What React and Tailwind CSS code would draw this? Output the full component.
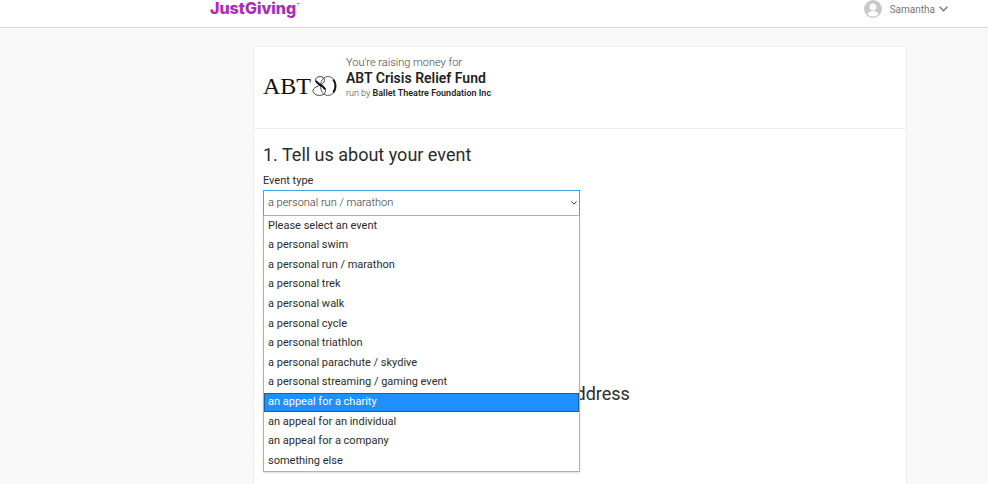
import { useState } from 'react'

const EVENT_TYPES = [
  'Please select an event',
  'a personal swim',
  'a personal run / marathon',
  'a personal trek',
  'a personal walk',
  'a personal cycle',
  'a personal triathlon',
  'a personal parachute / skydive',
  'a personal streaming / gaming event',
  'an appeal for a charity',
  'an appeal for an individual',
  'an appeal for a company',
  'something else',
]

export default function App() {
  return (
    <div className="min-h-screen bg-[#f8f8f8] font-['Roboto',sans-serif] text-[#2b2b2b]">
      <Header />
      <main className="pt-[18px] pr-[81px] pl-[253px]">
        <div className="border border-[#eeeeee] bg-white">
          <CharitySummary />
          <EventForm />
        </div>
      </main>
    </div>
  )
}

function Header() {
  return (
    <header className="flex h-7 items-start justify-between border-b border-[#dcdcdc] bg-white pl-[210px] pr-10">
      <a href="#home" className="flex items-start font-['Inter',sans-serif] text-base leading-4 font-extrabold text-[#ad29b6]">
        JustGiving
        <span className="text-[5px] leading-[10px]">™</span>
      </a>
      <button className="flex h-[18px] items-center gap-2 text-[10px] text-[#777777]">
        <Avatar />
        Samantha
        <svg className="-ml-1 h-[6px] w-[9px]" viewBox="0 0 9 6" fill="none" stroke="#777777" strokeWidth="1.4">
          <path d="M0.6 0.8 4.5 4.8 8.4 0.8" />
        </svg>
      </button>
    </header>
  )
}

function Avatar() {
  return (
    <svg className="size-[18px]" viewBox="0 0 18 18">
      <circle cx="9" cy="9" r="9" fill="#c9c9c9" />
      <circle cx="9" cy="7" r="3.4" fill="#fff" />
      <path d="M3.4 14.2c1-2.3 3-3.1 5.6-3.1s4.6.8 5.6 3.1A7.5 7.5 0 0 1 9 16.5a7.5 7.5 0 0 1-5.6-2.3Z" fill="#fff" />
    </svg>
  )
}

function CharitySummary() {
  return (
    <section className="flex gap-2 border-b border-[#eeeeee] px-[9px] pt-2 pb-[11px]">
      <CharityLogo />
      <div>
        <p className="text-[11px] leading-4 font-light text-[#444444]">You're raising money for</p>
        <h1 className="text-sm leading-[15px] font-semibold text-[#1f1f1f]">ABT Crisis Relief Fund</h1>
        <p className="text-[9px] leading-[14px] font-light text-[#444444]">
          run by <strong className="font-semibold text-[#1f1f1f]">Ballet Theatre Foundation Inc</strong>
        </p>
      </div>
    </section>
  )
}

function CharityLogo() {
  return (
    <div className="flex h-[62px] w-[75px] items-center font-['Liberation_Serif',serif] text-2xl leading-8 text-[#111111]">
      <span>ABT</span>
      <svg className="h-5 w-[26px] shrink-0" viewBox="0 0 26 20" fill="none" stroke="#111111" aria-label="80">
        <path d="M13.5 4.500C13.500 1.800 11.500.6 9 .6S4.500 1.800 4.500 4.200C4.500 8.800 14.500 9.500 14.500 14.500c0 3.200-2.600 4.900-6 4.900S2 17.600 2 14.600C2 10 13.500 9.500 13.500 4.500Z" strokeWidth=".8" />
        <path d="M5 4.800C6 8.500 13 9.500 14 13.500" strokeWidth="2" />
        <path d="M16.500.6C12 .8 9.500 5.500 9.500 10s2.500 9.200 7 9.400c6 .2 8.500-4.900 8.500-9.400S22.500.4 16.500.6Z" strokeWidth=".7" />
        <path d="M22.200 3.500c2.800 3.600 2.800 9.400 0 13" strokeWidth="1.800" />
      </svg>
    </div>
  )
}

function EventForm() {
  const [selected, setSelected] = useState('a personal run / marathon')
  const [active, setActive] = useState('an appeal for a charity')
  const [open, setOpen] = useState(true)

  const choose = (type) => {
    setSelected(type)
    setOpen(false)
  }

  return (
    <form className="px-[9px] pt-4 pb-20">
      <h2 className="text-lg leading-5">1. Tell us about your event</h2>
      <label htmlFor="event-type" className="mt-2 block text-[11px] leading-4">Event type</label>
      <div className="relative mt-[1px] w-1/2">
        <select
          id="event-type"
          value={selected}
          onChange={(e) => setSelected(e.target.value)}
          onMouseDown={(e) => {
            e.preventDefault()
            setOpen(!open)
          }}
          className="block h-[26px] w-full appearance-none border border-[#35a9e0] bg-white px-1 text-[11px] font-light text-[#333333] outline-none"
        >
          {EVENT_TYPES.map((type) => <option key={type}>{type}</option>)}
        </select>
        <svg className="pointer-events-none absolute top-[11px] right-[3px] h-1 w-[6px]" viewBox="0 0 6 4" fill="none" stroke="#333333">
          <path d="m.4.5 2.6 2.6L5.6.5" />
        </svg>
        {open && (
          <ul role="listbox" aria-label="Event type" className="absolute top-[25px] z-10 grid h-[257px] w-full auto-rows-fr border border-[#b0b0b0] bg-white text-[11px] shadow-sm">
            {EVENT_TYPES.map((type) => (
              <li
                key={type}
                role="option"
                aria-selected={type === selected}
                onMouseEnter={() => setActive(type)}
                onClick={() => choose(type)}
                className={`flex items-center px-1 ${type === active ? 'bg-[#1e90ff] text-white outline -outline-offset-1 outline-[#245f9c]' : ''}`}
              >
                {type}
              </li>
            ))}
          </ul>
        )}
      </div>
      <h2 className="mt-[168px] text-lg leading-5">2. Confirm your fundraising page web address</h2>
    </form>
  )
}
